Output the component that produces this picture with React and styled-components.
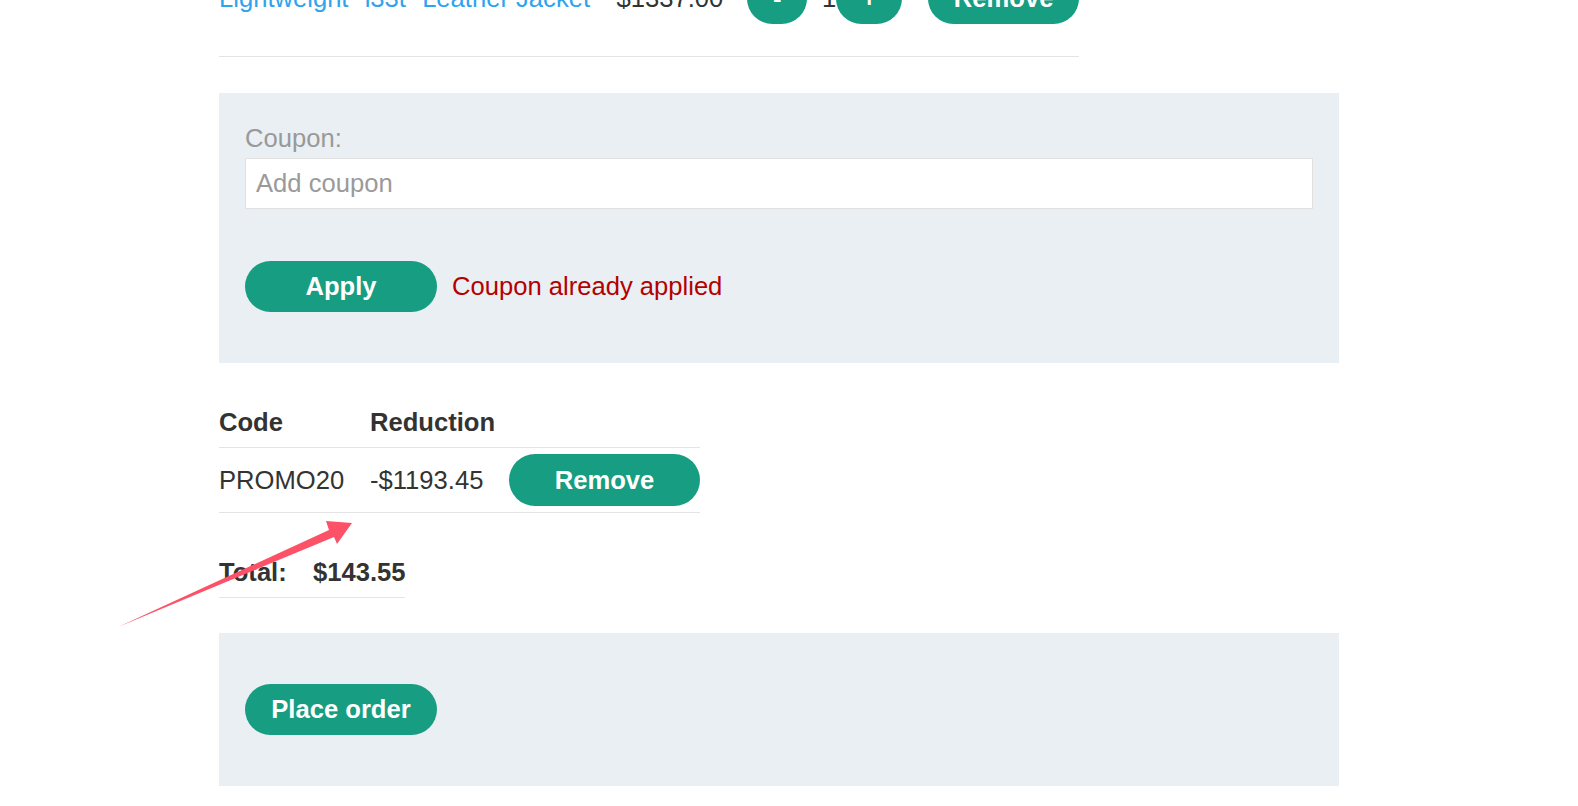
import styled, { createGlobalStyle } from "styled-components";

const GlobalStyle = createGlobalStyle`
  html, body {
    margin: 0;
    padding: 0;
    overflow: hidden;
    background: #ffffff;
  }
  body {
    font-family: "Liberation Sans", Arial, sans-serif;
    font-size: 25.6px;
    color: #333332;
  }
`;

const Page = styled.div`
  position: relative;
  width: 1578px;
  height: 806px;
  overflow: hidden;
`;

const Container = styled.div`
  margin-left: 219px;
  width: 1120px;
  display: flex;
  flex-direction: column;
`;

const Button = styled.button`
  height: ${(p) => p.$h || "51px"};
  min-width: ${(p) => p.$min || "0px"};
  padding: 0 25.6px;
  border: none;
  border-radius: 26px;
  background: #179d81;
  color: #ffffff;
  font-family: "Liberation Sans", Arial, sans-serif;
  font-size: 25.6px;
  font-weight: 700;
  cursor: pointer;
  flex-shrink: 0;
`;

const CartRow = styled.div`
  margin-top: -27px;
  width: 860px;
  display: flex;
  align-items: center;
  padding-bottom: 32px;
  border-bottom: 1px solid #e4e4e4;
`;

const ProductName = styled.a`
  width: 398px;
  color: #2fa4ee;
  text-decoration: none;
`;

const Price = styled.span`
  width: 131px;
`;

const Qty = styled.span`
  width: 14px;
  padding-left: 15px;
`;

const Panel = styled.div`
  margin-top: ${(p) => p.$top};
  background: #e9eff2;
  padding: ${(p) => p.$pad};
  display: flex;
  flex-direction: column;
  align-items: flex-start;
`;

const Label = styled.label`
  line-height: 39px;
  color: #999999;
`;

const Input = styled.input`
  box-sizing: border-box;
  width: 100%;
  height: 51px;
  margin-bottom: 52px;
  padding: 0 10px;
  border: 1px solid #e1e1e1;
  background: #ffffff;
  font-family: "Liberation Sans", Arial, sans-serif;
  font-size: 25.6px;
  color: #333332;
  outline: none;

  &::placeholder {
    color: #9a9a9a;
  }
`;

const ApplyRow = styled.div`
  display: flex;
  align-items: center;
  gap: 15px;
`;

const ErrorText = styled.span`
  color: #b40000;
`;

const Table = styled.div`
  margin-top: ${(p) => p.$top};
  width: ${(p) => p.$width};
  display: grid;
  grid-template-columns: ${(p) => p.$cols};
`;

const HeadCell = styled.div`
  height: 49px;
  display: flex;
  align-items: center;
  font-weight: 700;
  border-bottom: 1px solid #e4e4e4;
`;

const Cell = styled.div`
  padding: 6px 0 6px;
  display: flex;
  align-items: center;
  font-weight: ${(p) => (p.$bold ? 700 : 400)};
  border-bottom: 1px solid #e4e4e4;
`;

const TotalCell = styled(Cell)`
  height: 38px;
`;

const Arrow = styled.svg`
  position: absolute;
  left: 0;
  top: 0;
  pointer-events: none;
`;

export default function App() {
  return (
    <Page>
      <GlobalStyle />
      <Container>
        <CartRow>
          <ProductName href="#">Lightweight "l33t" Leather Jacket</ProductName>
          <Price>$1337.00</Price>
          <Button>-</Button>
          <Qty>1</Qty>
          <Button>+</Button>
          <Button style={{ marginLeft: 26 }}>Remove</Button>
        </CartRow>

        <Panel $top="36px" $pad="26px 26px 51px">
          <Label>Coupon:</Label>
          <Input placeholder="Add coupon" />
          <ApplyRow>
            <Button $min="192px">Apply</Button>
            <ErrorText>Coupon already applied</ErrorText>
          </ApplyRow>
        </Panel>

        <Table $top="35px" $width="481px" $cols="151px 139px 191px">
          <HeadCell>Code</HeadCell>
          <HeadCell>Reduction</HeadCell>
          <HeadCell />
          <Cell>PROMO20</Cell>
          <Cell>-$1193.45</Cell>
          <Cell>
            <Button $min="191px" $h="52px">Remove</Button>
          </Cell>
        </Table>

        <Table $top="34px" $width="186px" $cols="94px 92px">
          <TotalCell $bold>Total:</TotalCell>
          <TotalCell $bold>$143.55</TotalCell>
        </Table>

        <Panel $top="35px" $pad="51px 26px">
          <Button $min="192px">Place order</Button>
        </Panel>
      </Container>

      <Arrow width="1578" height="806" viewBox="0 0 1578 806">
        <polygon
          points="118,627 329,530 326,521 352,523 337,544 334,537"
          fill="#fd5167"
        />
      </Arrow>
    </Page>
  );
}
